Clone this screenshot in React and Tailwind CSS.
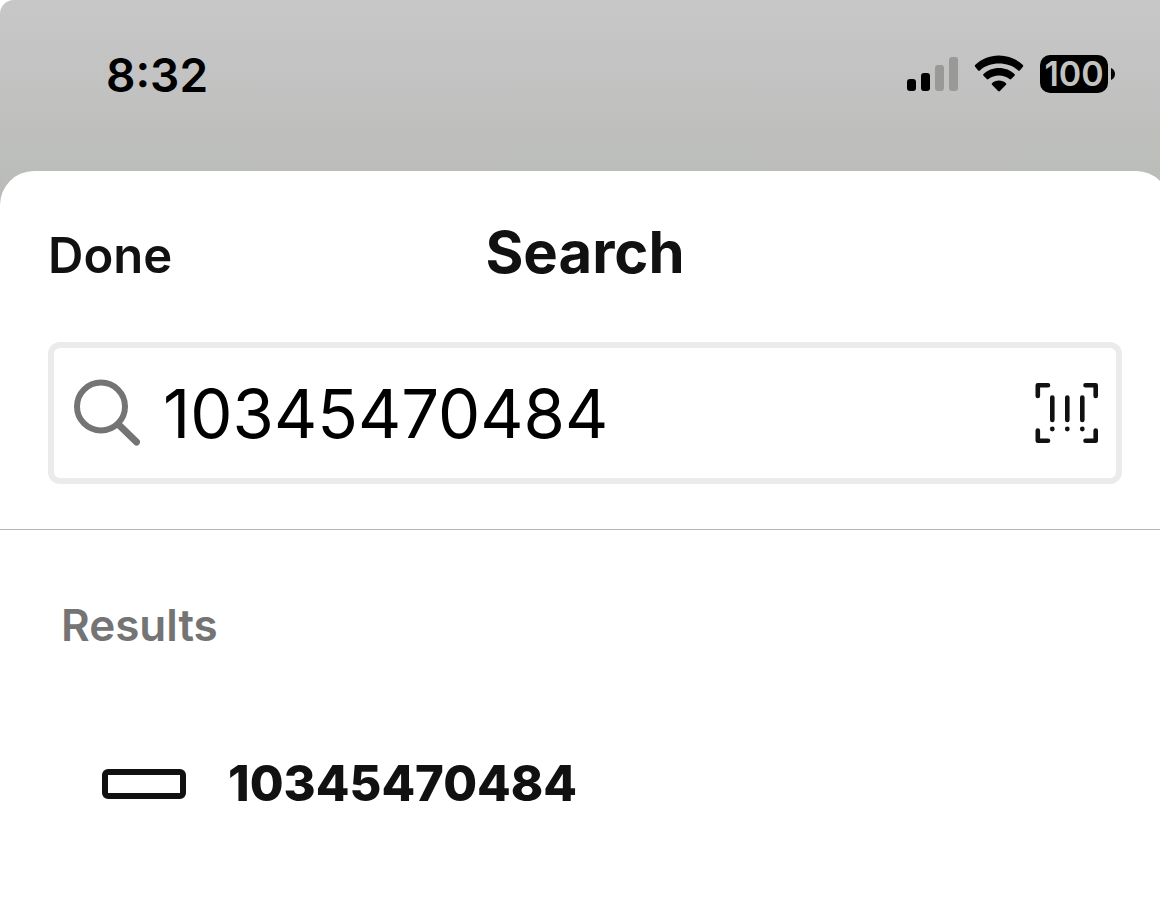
import React, { useState } from "react";

const SignalIcon = () => (
  <svg width="51" height="36" viewBox="0 0 51 36" aria-hidden="true">
    <rect x="0" y="23" width="9" height="12" rx="3" fill="#000" />
    <rect x="14" y="17" width="9" height="18" rx="3" fill="#000" />
    <rect x="28" y="9" width="9" height="26" rx="3" fill="#999a98" />
    <rect x="42" y="1" width="9" height="34" rx="3" fill="#999a98" />
  </svg>
);

const WifiIcon = () => (
  <svg width="50" height="38" viewBox="0 0 50 38" aria-hidden="true">
    <path d="M25 0.500C15.7 .5 7.2 4.100 1.100 10C.6 10.500 .6 11.200 1.100 11.700L4.200 15.400C4.700 15.900 5.400 15.900 5.900 15.400C10.900 10.700 17.600 8.500 25 8.500S39.100 10.700 44.100 15.400C44.600 15.900 45.300 15.900 45.800 15.400L48.900 11.700C49.400 11.200 49.400 10.500 48.900 10C42.800 4.100 34.300 .5 25 .5Z" />
    <path d="M25 13C19 13 13.500 15.300 9.500 19.100C9 19.600 9 20.300 9.500 20.800L12.800 24.100C13.300 24.600 14 24.600 14.500 24.100C17.300 21.500 21 20.400 25 20.400S32.700 21.500 35.500 24.100C36 24.600 36.700 24.600 37.200 24.100L40.500 20.800C41 20.300 41 19.600 40.500 19.100C36.500 15.300 31 13 25 13Z" />
    <path d="M25 25.500C22.300 25.500 19.800 26.500 18 28.200C17.500 28.700 17.500 29.300 18 29.800L24.100 36C24.600 36.500 25.400 36.500 25.900 36L32 29.800C32.500 29.300 32.500 28.700 32 28.200C30.200 26.500 27.700 25.500 25 25.500Z" />
  </svg>
);

const SearchIcon = () => (
  <svg
    className="shrink-0"
    width="68"
    height="68"
    viewBox="0 0 68 68"
    fill="none"
    stroke="#747474"
    aria-hidden="true"
  >
    <circle cx="29" cy="27.500" r="24" strokeWidth="6" />
    <path d="M47 46L64.500 63" strokeWidth="7" strokeLinecap="round" />
  </svg>
);

const BarcodeIcon = () => (
  <svg
    width="64"
    height="60"
    viewBox="0 0 64 60"
    fill="none"
    stroke="#111"
    strokeLinecap="round"
    strokeLinejoin="round"
    strokeWidth="4.600"
    aria-hidden="true"
  >
    <path d="M13 2.300H2.800V13M50.500 2.300H60.700V13M2.800 47.500V57.700H13M60.700 47.500V57.700H50.500" />
    <path d="M17.300 14.500V37M32.300 14.500V37M47.300 14.500V37" />
    <g fill="#111" stroke="none">
      <circle cx="17.300" cy="46" r="2.400" />
      <circle cx="32.300" cy="46" r="2.400" />
      <circle cx="47.300" cy="46" r="2.400" />
    </g>
  </svg>
);

const BatteryIcon = () => (
  <div className="flex items-center gap-[3px]">
    <div className="flex h-[38px] w-[68px] items-center justify-center rounded-[10px] bg-black text-[34px] leading-none font-semibold text-[#c2c3c1]">
      100
    </div>
    <svg width="4" height="12" viewBox="0 0 4 12" aria-hidden="true">
      <path d="M0 0C2.500 1 4 3 4 6S2.500 11 0 12Z" />
    </svg>
  </div>
);

const StatusBar = () => (
  <div className="flex h-[171px] items-start justify-between pt-[55px] pr-[45px] pl-[106px]">
    <span className="text-[46px] leading-[40px] font-semibold">8:32</span>
    <div className="flex items-center gap-4">
      <SignalIcon />
      <WifiIcon />
      <BatteryIcon />
    </div>
  </div>
);

const results = [{ id: 1, name: "10345470484" }];

const App = () => {
  const [query, setQuery] = useState("10345470484");

  return (
    <div className="min-h-screen overflow-hidden rounded-tl-[14px] bg-white bg-linear-to-b from-[#c7c7c7] to-[#b9bbb8] bg-[length:100%_210px] bg-no-repeat font-['Inter',sans-serif] text-black">
      <StatusBar />

      {/* sheet runs a little past the right edge of the screen */}
      <main className="-mr-[10px] rounded-t-[34px] bg-white text-[#111]">
        <header className="border-b border-[#b5b5b5] px-12 pt-[45px] pb-[45px]">
          <div className="grid grid-cols-[1fr_auto_1fr] items-baseline">
            <button type="button" className="justify-self-start text-[49px] leading-[72px] font-semibold">
              Done
            </button>
            <h1 className="text-[58px] leading-[72px] font-bold">Search</h1>
          </div>

          <div className="mt-[50px] flex h-[142px] items-center rounded-xl border-6 border-[#ebebeb] pr-[17px] pl-[18px]">
            <SearchIcon />
            <input
              type="text"
              aria-label="Search"
              className="ml-[23px] min-w-0 flex-1 bg-transparent pt-[2px] text-[67px] leading-[80px] text-black outline-none"
              value={query}
              onChange={(e) => setQuery(e.target.value)}
            />
            <button type="button" aria-label="Scan barcode">
              <BarcodeIcon />
            </button>
          </div>
        </header>

        <section className="px-[61px] pt-[67px]">
          <h2 className="text-[44px] leading-[56px] font-semibold text-[#747474]">
            Results
          </h2>
          <ul className="mt-[99px]">
            {results.map((item) => (
              <li key={item.id}>
                <a href="#" className="flex items-center gap-[42px] pl-[41px]">
                  <span className="h-[30px] w-[84px] rounded-md border-6 border-[#111]" />
                  <span className="text-[49px] leading-[64px] font-extrabold">
                    {item.name}
                  </span>
                </a>
              </li>
            ))}
          </ul>
        </section>
      </main>
    </div>
  );
};

export default App;
